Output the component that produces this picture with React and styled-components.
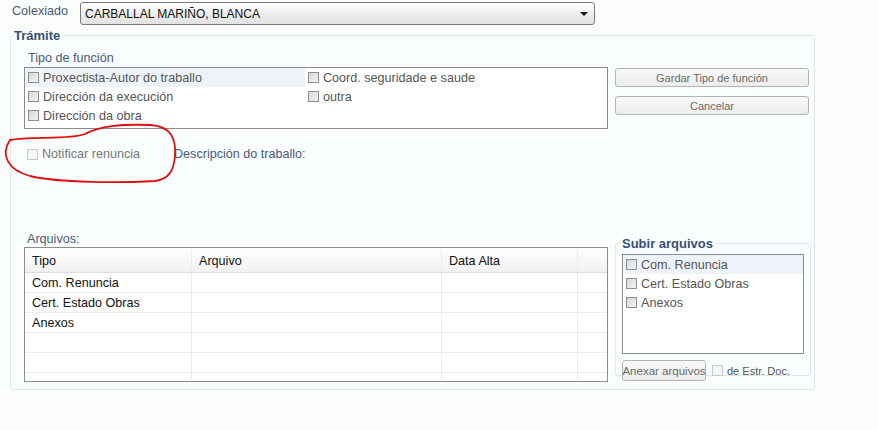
import React from 'react';
import styled, { createGlobalStyle } from 'styled-components';

const Global = createGlobalStyle`
  html, body {
    margin: 0;
    padding: 0;
    background: #fbfdfd;
  }
  body {
    font-family: "Liberation Sans", Arial, sans-serif;
    font-size: 12.6px;
    color: #222;
  }
`;

const Page = styled.div`
  position: relative;
  width: 878px;
  height: 430px;
  padding-top: 2px;
  box-sizing: border-box;
`;

const TopRow = styled.div`
  display: flex;
  align-items: center;
  height: 23px;
`;

const TopLabel = styled.span`
  width: 68px;
  padding-left: 12px;
  color: #4a5a78;
  margin-top: -6px;
`;

const Select = styled.div`
  width: 515px;
  height: 23px;
  box-sizing: border-box;
  border: 1px solid #7a7a7a;
  border-radius: 3px;
  background: linear-gradient(#ffffff, #ececec 55%, #e2e2e2);
  display: flex;
  align-items: center;
  justify-content: space-between;
  padding: 0 6px 0 4px;
  font-size: 12px;
  color: #111;
`;

const Arrow = styled.span`
  width: 0;
  height: 0;
  border-left: 4px solid transparent;
  border-right: 4px solid transparent;
  border-top: 4px solid #111;
`;

const Fieldset = styled.fieldset`
  margin: ${p => p.$margin || '0'};
  width: ${p => p.$width}px;
  height: ${p => p.$height}px;
  box-sizing: border-box;
  border: 1px solid #dfe5e8;
  border-radius: 3px;
  background: #fafdfd;
  padding: ${p => p.$padding || '0'};
  min-width: 0;
`;

const Legend = styled.legend`
  padding: 0 3px 0 1px;
  margin-left: ${p => p.$ml || 0}px;
  font-weight: bold;
  font-size: 13px;
  color: #375176;
`;

const Section = styled.div`
  display: flex;
  gap: 7px;
  margin-top: ${p => p.$mt || 0}px;
`;

const Column = styled.div`
  display: flex;
  flex-direction: column;
`;

const Caption = styled.span`
  color: #4a5a78;
  padding-left: ${p => p.$pl || 0}px;
  height: ${p => p.$h || 16}px;
  line-height: 16px;
`;

const ListBox = styled.div`
  width: ${p => p.$width}px;
  height: ${p => p.$height}px;
  margin-top: ${p => p.$mt || 0}px;
  box-sizing: border-box;
  border: 1px solid #8c8c8c;
  background: #fff;
  display: grid;
  grid-template-columns: ${p => p.$cols || '1fr'};
  grid-template-rows: ${p => p.$rows || 'none'};
  grid-auto-rows: 19px;
  grid-auto-flow: ${p => (p.$rows ? 'column' : 'row')};
  align-content: start;
`;

const Item = styled.div`
  display: flex;
  align-items: center;
  gap: 4px;
  padding-left: 3px;
  color: #555;
  background: ${p => (p.$active ? '#eef3fa' : 'transparent')};
`;

const Box = styled.span`
  display: inline-block;
  width: 11px;
  height: 11px;
  box-sizing: border-box;
  border: 1px solid ${p => (p.$disabled ? '#c9c9c9' : '#8e8e8e')};
  background: ${p =>
    p.$disabled ? '#f6f6f6' : 'linear-gradient(135deg, #d8d8d8, #f4f4f4)'};
  flex: none;
`;

const Buttons = styled.div`
  display: flex;
  flex-direction: column;
  gap: 9px;
  padding-top: 18px;
`;

const Button = styled.div`
  width: ${p => p.$width}px;
  height: ${p => p.$height || 19}px;
  box-sizing: border-box;
  border: 1px solid #b4b4b4;
  border-radius: 3px;
  background: linear-gradient(#f9f9f9, #ececec);
  color: #6a6a6a;
  font-size: ${p => p.$fs || 11}px;
  white-space: nowrap;
  display: flex;
  align-items: center;
  justify-content: center;
`;

const NotifyRow = styled.div`
  display: flex;
  align-items: center;
  margin-top: 18px;
  padding-left: 3px;
  height: 14px;
`;

const NotifyLabel = styled.span`
  color: #777;
  margin-left: 4px;
  width: 132px;
`;

const Table = styled.div`
  width: 584px;
  height: 135px;
  box-sizing: border-box;
  border: 1px solid #8c8c8c;
  background: #fff;
  overflow: hidden;
`;

const TRow = styled.div`
  display: grid;
  grid-template-columns: 167px 250px 136px 1fr;
  height: ${p => (p.$head ? 25 : 20)}px;
  padding-top: ${p => (p.$head ? 2 : 0)}px;
  box-sizing: border-box;
  border-bottom: 1px solid ${p => (p.$head ? '#dcdcdc' : '#ececec')};
  background: ${p => (p.$head ? 'linear-gradient(#ffffff, #f1f1f1)' : '#fff')};
`;

const Cell = styled.div`
  display: flex;
  align-items: center;
  padding-left: 7px;
  border-right: 1px solid #ececec;
  color: #111;
  &:last-child {
    border-right: none;
  }
`;

const Footer = styled.div`
  display: flex;
  align-items: center;
  gap: 6px;
  margin-top: 6px;
`;

const SmallText = styled.span`
  color: #555;
  font-size: 11px;
  margin-left: -2px;
`;

const Scribble = styled.svg`
  position: absolute;
  left: 0;
  top: 0;
  pointer-events: none;
`;

const tipos = [
  ['Proxectista-Autor do traballo', true],
  ['Dirección da execución'],
  ['Dirección da obra'],
  ['Coord. seguridade e saude'],
  ['outra'],
];

const arquivos = ['Com. Renuncia', 'Cert. Estado Obras', 'Anexos', '', '', ''];

export default function App() {
  return (
    <Page>
      <Global />
      <TopRow>
        <TopLabel>Colexiado</TopLabel>
        <Select>
          <span>CARBALLAL MARIÑO, BLANCA</span>
          <Arrow />
        </Select>
      </TopRow>

      <Fieldset $margin="3px 0 0 10px" $width={805} $height={362} $padding="0 0 0 13px">
        <Legend $ml={-11}>Trámite</Legend>
        <Section $mt={7}>
          <Column>
            <Caption $pl={4} $h={17}>Tipo de función</Caption>
            <ListBox $width={584} $height={62} $cols="280px 1fr" $rows="repeat(3, 19px)">
              {tipos.map(([t, a]) => (
                <Item key={t} $active={a}>
                  <Box />
                  {t}
                </Item>
              ))}
            </ListBox>
          </Column>
          <Buttons>
            <Button $width={194}>Gardar Tipo de función</Button>
            <Button $width={194}>Cancelar</Button>
          </Buttons>
        </Section>

        <NotifyRow>
          <Box $disabled />
          <NotifyLabel>Notificar renuncia</NotifyLabel>
          <Caption>Descripción do traballo:</Caption>
        </NotifyRow>

        <Section $mt={70}>
          <Column>
            <Caption $pl={3} $h={16}>Arquivos:</Caption>
            <Table>
              <TRow $head>
                <Cell>Tipo</Cell>
                <Cell>Arquivo</Cell>
                <Cell>Data Alta</Cell>
                <Cell />
              </TRow>
              {arquivos.map((a, i) => (
                <TRow key={i}>
                  <Cell>{a}</Cell>
                  <Cell />
                  <Cell />
                  <Cell />
                </TRow>
              ))}
            </Table>
          </Column>
          <Fieldset $margin="5px 0 0 0" $width={196} $height={140} $padding="0 6px 0 6px">
            <Legend $ml={-1}>Subir arquivos</Legend>
            <ListBox $width={182} $height={100} $mt={3}>
              {arquivos.slice(0, 3).map((a, i) => (
                <Item key={a} $active={i === 0}>
                  <Box />
                  {a}
                </Item>
              ))}
            </ListBox>
            <Footer>
              <Button $width={84} $height={21} $fs={11.5}>Anexar arquivos</Button>
              <Box $disabled />
              <SmallText>de Estr. Doc.</SmallText>
            </Footer>
          </Fieldset>
        </Section>
      </Fieldset>

      <Scribble width="200" height="200">
        <path
          d="M 10 140 C 30 136, 70 140, 85 134 C 100 126, 120 124, 150 125 C 172 126, 176 140, 175 155 C 174 172, 168 179, 155 181 C 120 183, 60 183, 30 176 C 8 170, 0 155, 10 140 Z"
          fill="none"
          stroke="#e01010"
          strokeWidth="1.8"
        />
      </Scribble>
    </Page>
  );
}
